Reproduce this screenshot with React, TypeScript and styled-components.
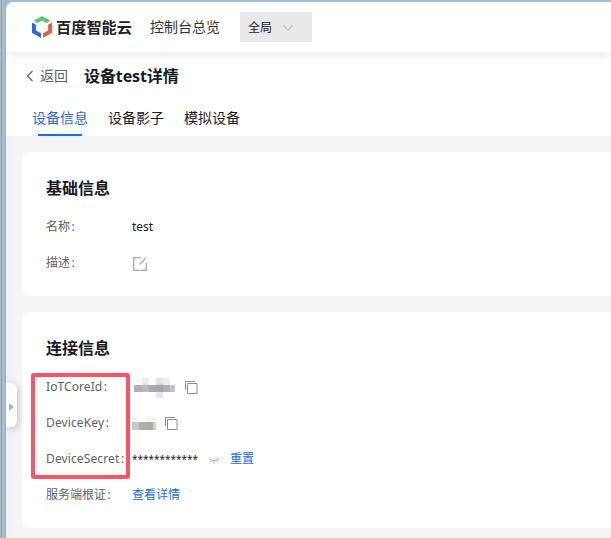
import React from 'react';
import styled, { createGlobalStyle } from 'styled-components';

const GlobalStyle = createGlobalStyle`
  * { box-sizing: border-box; }
  body { margin: 0; overflow: hidden; }
`;

const Desktop = styled.div`
  width: 611px;
  height: 538px;
  padding: 2px 0 0 6px;
  overflow: hidden;
  background: linear-gradient(90deg, #b9b6b5 0 1px, #a09fa0 1px 2px, #9dc0d6 2px 5px, #94b3c7 5px 6px, #9dc0d6 6px);
  font-family: 'Noto Sans', 'Noto Sans CJK SC', sans-serif;
  font-size: 12px;
  color: #151b26;
`;

const Window = styled.div`
  position: relative;
  height: 536px;
  display: flex;
  flex-direction: column;
  overflow: hidden;
  border-top-left-radius: 8px;
  background: #f4f4f6;
`;

const TopBar = styled.header`
  position: relative;
  z-index: 2;
  height: 50px;
  flex: none;
  display: flex;
  align-items: center;
  padding-left: 26px;
  background: #fff;
  box-shadow: 0 1px 10px rgba(0, 0, 0, 0.13);
`;

const Brand = styled.div`
  display: flex;
  align-items: center;
  gap: 4px;
  width: 118px;
  font: 700 15.2px/22px 'Noto Sans CJK SC', sans-serif;
  color: #222;
  white-space: nowrap;
`;

const BrandName = styled.span`
  padding-bottom: 2px;
`;

const Overview = styled.span`
  width: 90px;
  padding-bottom: 2px;
  font: 14px/20px 'Noto Sans CJK SC', sans-serif;
  color: #333;
`;

const Region = styled.button`
  width: 72px;
  height: 30px;
  display: flex;
  align-items: center;
  gap: 10px;
  padding: 0 8px;
  border: 0;
  background: #e9e9e9;
  color: #222;
  font: 12px/20px 'Noto Sans CJK SC', sans-serif;
`;

const PageHead = styled.div`
  height: 48px;
  flex: none;
  display: flex;
  align-items: center;
  padding-left: 20px;
  background: #fff;
`;

const Back = styled.a`
  display: flex;
  align-items: center;
  gap: 6px;
  width: 58px;
  padding-bottom: 1px;
  font: 14px/19px 'Noto Sans CJK SC', sans-serif;
  color: #5c5f66;
`;

const Title = styled.h1`
  margin: 0;
  font-size: 16px;
  line-height: 24px;
  font-weight: 700;
  letter-spacing: -0.1px;
`;

const Tabs = styled.nav`
  height: 36px;
  flex: none;
  display: flex;
  gap: 20px;
  padding-left: 26px;
  background: #fff;
`;

const Tab = styled.a<{ $active?: boolean }>`
  height: 36px;
  display: flex;
  flex-direction: column;
  align-items: center;
  justify-content: space-between;
  font: 14px/34px 'Noto Sans CJK SC', sans-serif;
  color: ${(p) => (p.$active ? '#2468f2' : '#151b26')};
  &::after {
    content: '';
    width: 44px;
    height: 2px;
    background: ${(p) => (p.$active ? '#2468f2' : 'transparent')};
  }
`;

const Content = styled.main`
  flex: 1;
  display: flex;
  flex-direction: column;
  gap: 16px;
  padding: 16px 0 0 16px;
  background: linear-gradient(90deg, #efeff3, #f4f4f6 12px);
`;

const Card = styled.section<{ $height: number }>`
  height: ${(p) => p.$height}px;
  flex: none;
  padding: 23px 24px 0;
  border-radius: 6px 0 0 6px;
  background: #fff;
`;

const CardTitle = styled.h2`
  margin: 0 0 10px;
  font: 700 16px/24px 'Noto Sans CJK SC', sans-serif;
`;

const Row = styled.div`
  height: 36px;
  display: flex;
  align-items: center;
  line-height: 20px;
`;

const Label = styled.span<{ $spacing?: number }>`
  width: 86px;
  flex: none;
  color: #5c5f66;
  white-space: nowrap;
  letter-spacing: ${(p) => p.$spacing ?? 0}px;
`;

const Colon = styled.span`
  padding-left: 1.5px;
`;

const Value = styled.div<{ $gap?: number }>`
  display: flex;
  align-items: center;
  gap: ${(p) => p.$gap ?? 0}px;
`;

const Stars = styled.span`
  width: 67px;
  white-space: nowrap;
  font: 10px/20px 'Noto Sans', sans-serif;
`;

const Link = styled.a`
  color: #2468f2;
`;

const Drawing = styled.svg`
  display: block;
  flex: none;
`;

const LowDrawing = styled(Drawing)`
  margin-top: 2px;
`;

const Handle = styled.button`
  position: absolute;
  left: 0;
  top: 381px;
  width: 11px;
  height: 44px;
  display: flex;
  align-items: center;
  justify-content: center;
  padding: 4px 0 0;
  border: 0;
  border-radius: 0 6px 6px 0;
  background: #fff;
  box-shadow: 2px 2px 6px rgba(0, 0, 0, 0.18);
`;

const Highlight = styled.div`
  position: absolute;
  left: 25px;
  top: 371px;
  width: 99px;
  height: 106px;
  border: 4px solid #ff5364;
  border-radius: 3px;
`;

const Logo = () => (
  <Drawing width="20" height="22" viewBox="0 0 20 22">
    <path d="M10 0 18.5 4.8 14.8 7.1 10 4.8 5.2 7.1 1.5 4.8Z" fill="#57c785" />
    <path d="M0 6.4 3.9 8.7V14.4L9 17.3V22L0 16.7Z" fill="#2468f2" />
    <path d="M20 6.4 16.1 8.7V14.4L11 17.3V22L20 16.7Z" fill="#ee5b3d" />
  </Drawing>
);

const CopyIcon = () => (
  <Drawing width="13" height="13" fill="none" stroke="#8c8e93">
    <path d="M.5 9V.5H10M2.5 2.5h9.5v10h-9.5Z" />
  </Drawing>
);

type Cell = [number, number, number, number, string];

const Mosaic = ({ cells, width, height }: { cells: Cell[]; width: number; height: number }) => (
  <Drawing width={width} height={height} shapeRendering="crispEdges">
    {cells.map(([x, y, w, h, fill], i) => (
      <rect key={i} x={x} y={y} width={w} height={h} fill={fill} />
    ))}
  </Drawing>
);

const idCells: Cell[] = [
  [10, 1, 7, 7, '#ededed'], [24, 1, 7, 7, '#e3e3e4'], [31, 1, 7, 7, '#f0efef'],
  [2, 8, 8, 7, '#afb1b9'], [10, 8, 7, 7, '#b6b8bd'], [17, 8, 7, 7, '#a7aab1'],
  [24, 8, 7, 7, '#a5a6ac'], [31, 8, 7, 7, '#adb1b8'], [38, 8, 5, 7, '#c0c4ca'],
  [10, 7, 7, 1, '#dedfe0'], [24, 7, 7, 1, '#d3d5d7'], [24, 15, 7, 6, '#e6e6e7'],
];

const keyCells: Cell[] = [
  [0, 0, 7, 5, '#f3f6f4'], [14, 0, 7, 5, '#fcf1ed'], [21, 0, 3, 5, '#edf6fc'],
  [0, 5, 7, 8, '#c7c8c8'], [7, 5, 7, 8, '#adaeb1'], [14, 5, 7, 8, '#b2a9a9'], [21, 5, 3, 8, '#c2d6e9'],
];

export default function App() {
  return (
    <>
      <GlobalStyle />
      <Desktop>
        <Window>
          <TopBar>
            <Brand><Logo /><BrandName>百度智能云</BrandName></Brand>
            <Overview>控制台总览</Overview>
            <Region>
              全局
              <Drawing width="12" height="7" fill="none" stroke="#c8c8c8" strokeWidth="1.7">
                <path d="M1 1 6 6 11 1" />
              </Drawing>
            </Region>
          </TopBar>
          <PageHead>
            <Back>
              <Drawing width="8" height="12" fill="none" stroke="#5c5f66" strokeWidth="1.2">
                <path d="M6.5 1 1.5 6 6.5 11" />
              </Drawing>
              返回
            </Back>
            <Title>设备test详情</Title>
          </PageHead>
          <Tabs>
            <Tab $active>设备信息</Tab>
            <Tab>设备影子</Tab>
            <Tab>模拟设备</Tab>
          </Tabs>
          <Content>
            <Card $height={144}>
              <CardTitle>基础信息</CardTitle>
              <Row><Label>名称<Colon>:</Colon></Label><Value>test</Value></Row>
              <Row>
                <Label>描述<Colon>:</Colon></Label>
                <LowDrawing width="16" height="14" fill="none" stroke="#a8aaae" strokeWidth="1.3">
                  <path d="M9 .7H1.7V13.3H14.3V6M7.5 7.5 14 .9" />
                </LowDrawing>
              </Row>
            </Card>
            <Card $height={216}>
              <CardTitle>连接信息</CardTitle>
              <Row>
                <Label $spacing={0.08}>IoTCoreId<Colon>:</Colon></Label>
                <Value $gap={10}><Mosaic cells={idCells} width={43} height={21} /><CopyIcon /></Value>
              </Row>
              <Row>
                <Label $spacing={0.12}>DeviceKey<Colon>:</Colon></Label>
                <Value $gap={9}><Mosaic cells={keyCells} width={24} height={13} /><CopyIcon /></Value>
              </Row>
              <Row>
                <Label $spacing={0.12}>DeviceSecret<Colon>:</Colon></Label>
                <Value>
                  <Stars>************</Stars>
                  <Value $gap={11}>
                    <LowDrawing width="20" height="8" fill="none" stroke="#a7a9ad">
                      <path d="M10.5 2.5Q15 7 19.5 2.5M12.5 4.5 11 6M15 5V7.5M17.5 4.5 19 6" />
                    </LowDrawing>
                    <Link>重置</Link>
                  </Value>
                </Value>
              </Row>
              <Row><Label>服务端根证<Colon>:</Colon></Label><Link>查看详情</Link></Row>
            </Card>
          </Content>
          <Handle aria-label="展开">
            <Drawing width="5" height="8"><path d="M0 0 5 4 0 8Z" fill="#b0b1b5" /></Drawing>
          </Handle>
          <Highlight />
        </Window>
      </Desktop>
    </>
  );
}
